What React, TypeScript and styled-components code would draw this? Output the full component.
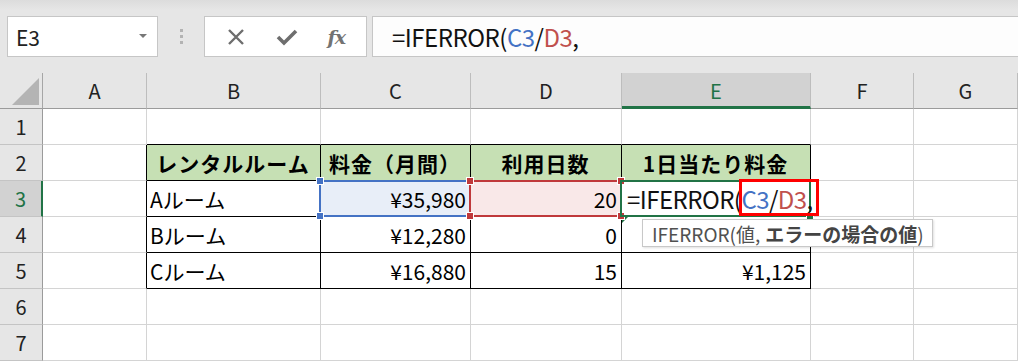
import styled, { createGlobalStyle, css } from "styled-components";

const GREEN = "#217346";
const FONT = `"Noto Sans CJK JP", "Noto Sans", sans-serif`;

const Global = createGlobalStyle`
  html, body {
    margin: 0;
    padding: 0;
    background: #ffffff;
    overflow: hidden;
  }
  body {
    font-family: ${FONT};
    color: #000;
  }
`;

const Window = styled.div`
  width: 1018px;
  height: 361px;
  display: flex;
  flex-direction: column;
  background: #e6e6e6;
  overflow: hidden;
`;

const Toolbar = styled.div`
  height: 73px;
  flex: none;
  display: flex;
  align-items: flex-start;
  padding: 16px 0 0 7px;
  box-sizing: border-box;
  background: linear-gradient(#dcdcdc 0px, #e6e6e6 10px);
`;

const NameBox = styled.div`
  width: 151px;
  height: 41px;
  box-sizing: border-box;
  border: 1px solid #c6c6c6;
  background: #fff;
  display: flex;
  align-items: center;
  justify-content: space-between;
  padding: 0 10px 0 8px;
  font-size: 21px;
  color: #222;
`;

const DropArrow = styled.span`
  width: 0;
  height: 0;
  border-left: 4px solid transparent;
  border-right: 4px solid transparent;
  border-top: 4px solid #777;
  margin-top: -2px;
`;

const Grip = styled.div`
  width: 46px;
  height: 41px;
  display: flex;
  flex-direction: column;
  align-items: center;
  justify-content: center;
  gap: 3px;
  span {
    width: 3px;
    height: 3px;
    background: #b3b3b3;
  }
`;

const FxBox = styled.div`
  width: 163px;
  height: 41px;
  box-sizing: border-box;
  border: 1px solid #c6c6c6;
  background: #fff;
  display: flex;
  align-items: center;
  justify-content: space-around;
  padding: 0 6px;
`;

const FxText = styled.span`
  font-family: "DejaVu Serif", "Liberation Serif", serif;
  font-style: italic;
  font-weight: bold;
  font-size: 19px;
  color: #737373;
  letter-spacing: -1px;
`;

const FormulaBar = styled.div`
  flex: 1;
  height: 41px;
  margin-left: 5px;
  box-sizing: border-box;
  border: 1px solid #c6c6c6;
  border-right: none;
  background: #fdfdfd;
  display: flex;
  align-items: center;
  padding-left: 19px;
  font-size: 24px;
  letter-spacing: -0.5px;
  color: #111;
`;

const Sheet = styled.div`
  display: grid;
  grid-template-columns: 43px 104px 174px 150px 151px 189px 103px 1fr;
  grid-auto-rows: 36px;
  flex: 1;
`;

const Corner = styled.div`
  position: relative;
  background: #e6e6e6;
  border-right: 1px solid #a6a6a6;
  border-bottom: 1px solid #9b9b9b;
  svg {
    position: absolute;
    left: 11px;
    top: 4px;
  }
`;

const ColHead = styled.div<{ $active?: boolean }>`
  background: ${(p) => (p.$active ? "#d2d2d2" : "#e6e6e6")};
  border-right: 1px solid #bdbdbd;
  border-bottom: ${(p) => (p.$active ? `3px solid ${GREEN}` : "1px solid #9b9b9b")};
  display: flex;
  align-items: center;
  justify-content: center;
  font-size: 20px;
  color: ${(p) => (p.$active ? GREEN : "#222")};
  padding-top: ${(p) => (p.$active ? "2px" : "0")};
`;

const RowHead = styled.div<{ $active?: boolean }>`
  background: ${(p) => (p.$active ? "#d2d2d2" : "#e6e6e6")};
  border-right: ${(p) => (p.$active ? `2px solid ${GREEN}` : "1px solid #9b9b9b")};
  border-bottom: 1px solid #c4c4c4;
  display: flex;
  align-items: center;
  justify-content: center;
  font-size: 20px;
  color: ${(p) => (p.$active ? GREEN : "#222")};
`;

const Cell = styled.div<{
  $right?: boolean;
  $bottom?: boolean;
  $align?: "left" | "right" | "center";
  $head?: boolean;
  $fill?: string;
}>`
  position: relative;
  background: ${(p) => (p.$head ? "#c6e0b4" : p.$fill || "#fff")};
  border-right: 1px solid ${(p) => (p.$right ? "#000" : "#d4d4d4")};
  border-bottom: 1px solid ${(p) => (p.$bottom ? "#000" : "#d4d4d4")};
  display: flex;
  align-items: center;
  justify-content: ${(p) =>
    p.$align === "right" ? "flex-end" : p.$align === "center" ? "center" : "flex-start"};
  padding: 0 4px 0 3px;
  font-size: 21px;
  white-space: nowrap;
  ${(p) =>
    p.$head &&
    css`
      font-weight: bold;
      font-size: 21px;
      letter-spacing: 1px;
    `}
`;

const Frame = styled.div<{ $color: string }>`
  position: absolute;
  left: -2px;
  top: -1px;
  right: -1px;
  bottom: -1px;
  border: 2px solid ${(p) => p.$color};
  pointer-events: none;
  z-index: 2;
`;

const Handle = styled.span<{ $color: string; $x: "l" | "r"; $y: "t" | "b" }>`
  position: absolute;
  width: 6px;
  height: 6px;
  background: ${(p) => p.$color};
  border: 1px solid #fff;
  ${(p) => (p.$x === "l" ? "left: -5px;" : "right: -5px;")}
  ${(p) => (p.$y === "t" ? "top: -5px;" : "bottom: -5px;")}
`;

const EditText = styled.span`
  position: relative;
  z-index: 3;
  font-size: 24px;
  letter-spacing: -0.55px;
  margin-left: 2px;
  color: #111;
`;

const RefBlue = styled.span`
  color: #4472c4;
`;
const RefRed = styled.span`
  color: #c0504d;
`;

const Callout = styled.div`
  position: absolute;
  left: 117px;
  top: -2px;
  width: 80px;
  height: 37px;
  box-sizing: border-box;
  border: 3px solid #ff0000;
  z-index: 4;
`;

const ErrorMark = styled.span`
  position: absolute;
  left: 0;
  top: 0;
  width: 0;
  height: 0;
  border-top: 6px solid ${GREEN};
  border-right: 6px solid transparent;
`;

const Tooltip = styled.div`
  position: absolute;
  left: 20px;
  top: 38px;
  height: 28px;
  box-sizing: border-box;
  padding: 0 8px 0 9px;
  background: #fff;
  border: 1px solid #c8c8c8;
  box-shadow: 1px 1px 2px rgba(0, 0, 0, 0.12);
  display: flex;
  align-items: center;
  font-size: 19px;
  color: #505050;
  white-space: pre;
  z-index: 5;
  b {
    font-weight: bold;
    color: #444;
    margin-left: 5px;
  }
`;

const cols = ["A", "B", "C", "D", "E", "F", "G"];

type Row = { name: string; price: string; days: string; per: string };

const rows: Row[] = [
  { name: "Aルーム", price: "¥35,980", days: "20", per: "" },
  { name: "Bルーム", price: "¥12,280", days: "0", per: "" },
  { name: "Cルーム", price: "¥16,880", days: "15", per: "¥1,125" },
];

const heads = ["レンタルルーム", "料金（月間）", "利用日数", "1日当たり料金"];

const Handles = ({ color }: { color: string }) => (
  <>
    <Handle $color={color} $x="l" $y="t" />
    <Handle $color={color} $x="r" $y="t" />
    <Handle $color={color} $x="l" $y="b" />
    <Handle $color={color} $x="r" $y="b" />
  </>
);

const Formula = () => (
  <>
    =IFERROR(<RefBlue>C3</RefBlue>/<RefRed>D3</RefRed>,
  </>
);

const App = () => {
  const renderRow = (r: number) => {
    const out = [];
    out.push(
      <RowHead key={`h${r}`} $active={r === 3}>
        {r}
      </RowHead>
    );
    for (let c = 0; c < cols.length; c++) {
      const inTable = r >= 2 && r <= 5 && c >= 1 && c <= 4;
      const right = r >= 2 && r <= 5 && c >= 0 && c <= 4;
      const bottom = r >= 1 && r <= 5 && c >= 1 && c <= 4;
      const key = `${cols[c]}${r}`;
      let content: React.ReactNode = null;
      let align: "left" | "right" | "center" = "left";
      let fill: string | undefined;
      let extra: React.ReactNode = null;

      if (r === 2 && inTable) {
        content = heads[c - 1];
        align = "center";
      } else if (inTable) {
        const row = rows[r - 3];
        if (c === 1) content = row.name;
        if (c === 2) {
          content = row.price;
          align = "right";
        }
        if (c === 3) {
          content = row.days;
          align = "right";
        }
        if (c === 4) {
          content = row.per;
          align = "right";
        }
      }

      if (key === "C3") {
        fill = "#e8eef8";
        extra = (
          <Frame $color="#4472c4">
            <Handles color="#4472c4" />
          </Frame>
        );
      }
      if (key === "D3") {
        fill = "#f9e8e8";
        extra = (
          <Frame $color="#c0393b">
            <Handles color="#c0393b" />
          </Frame>
        );
      }
      if (key === "E3") {
        align = "left";
        content = (
          <EditText>
            <Formula />
          </EditText>
        );
        extra = (
          <>
            <Frame $color={GREEN}>
              <Handle $color={GREEN} $x="r" $y="b" />
            </Frame>
            <Callout />
            <Tooltip>
              IFERROR(値,<b>エラーの場合の値</b>)
            </Tooltip>
          </>
        );
      }
      if (key === "E4") {
        extra = <ErrorMark />;
      }

      out.push(
        <Cell
          key={key}
          $right={right}
          $bottom={bottom}
          $align={align}
          $head={r === 2 && inTable}
          $fill={fill}
        >
          {content}
          {extra}
        </Cell>
      );
    }
    return out;
  };

  return (
    <Window>
      <Global />
      <Toolbar>
        <NameBox>
          E3
          <DropArrow />
        </NameBox>
        <Grip>
          <span />
          <span />
          <span />
        </Grip>
        <FxBox>
          <svg width="20" height="20" viewBox="0 0 20 20">
            <path d="M3 3 L17 17 M17 3 L3 17" stroke="#6e6e6e" strokeWidth="2.4" fill="none" />
          </svg>
          <svg width="22" height="20" viewBox="0 0 22 20">
            <path d="M2 10 L8 16 L20 4" stroke="#6e6e6e" strokeWidth="3.6" fill="none" />
          </svg>
          <FxText>fx</FxText>
        </FxBox>
        <FormulaBar>
          <Formula />
        </FormulaBar>
      </Toolbar>
      <Sheet>
        <Corner>
          <svg width="29" height="29" viewBox="0 0 29 29">
            <polygon points="1,28 28,28 28,1" fill="#b4b4b4" />
          </svg>
        </Corner>
        {cols.map((c) => (
          <ColHead key={c} $active={c === "E"}>
            {c}
          </ColHead>
        ))}
        {[1, 2, 3, 4, 5, 6, 7].map((r) => renderRow(r))}
      </Sheet>
    </Window>
  );
};

export default App;
